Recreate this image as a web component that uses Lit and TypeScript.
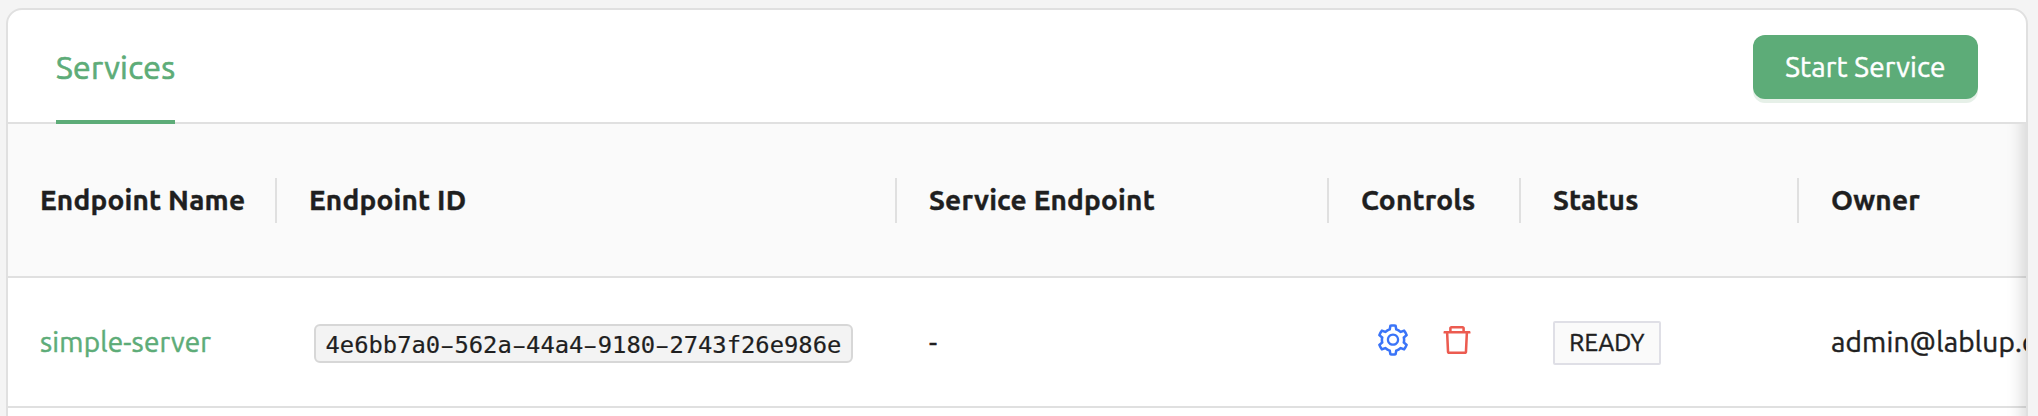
import { LitElement, html, css, svg } from "lit";
import { customElement } from "lit/decorators.js";

const gear =
  "M924.8 625.7l-65.5-56c3.1-19 4.7-38.4 4.7-57.8s-1.6-38.8-4.7-57.8l65.5-56a32.03 32.03 0 009.3-35.2l-.9-2.6a443.74 443.74 0 00-79.7-137.9l-1.8-2.1a32.12 32.12 0 00-35.1-9.5l-81.3 28.9c-30-24.6-63.5-44-99.7-57.6l-15.7-85a32.05 32.05 0 00-25.8-25.7l-2.7-.5c-52.1-9.4-106.9-9.4-159 0l-2.7.5a32.05 32.05 0 00-25.8 25.7l-15.8 85.4a351.86 351.86 0 00-99 57.4l-81.9-29.1a32 32 0 00-35.1 9.5l-1.8 2.1a446.02 446.02 0 00-79.7 137.9l-.9 2.6c-4.5 12.5-.8 26.5 9.3 35.2l66.3 56.6c-3.1 18.8-4.6 38-4.6 57.1 0 19.2 1.5 38.4 4.6 57.1L99 625.5a32.03 32.03 0 00-9.3 35.2l.9 2.6c18.1 50.4 44.9 96.9 79.7 137.9l1.8 2.1a32.12 32.12 0 0035.1 9.5l81.9-29.1c29.8 24.5 63.1 43.9 99 57.4l15.8 85.4a32.05 32.05 0 0025.8 25.7l2.7.5a449.4 449.4 0 00159 0l2.7-.5a32.05 32.05 0 0025.8-25.7l15.7-85a350 350 0 0099.7-57.6l81.3 28.9a32 32 0 0035.1-9.5l1.8-2.1c34.8-41.1 61.6-87.5 79.7-137.9l.9-2.6c4.5-12.3.8-26.3-9.3-35zM788.3 465.9c2.5 15.1 3.8 30.6 3.8 46.1s-1.3 31-3.8 46.1l-6.6 40.1 74.7 63.9a370.03 370.03 0 01-42.6 73.6L721 702.8l-31.4 25.8c-23.9 19.6-50.5 35-79.3 45.8l-38.1 14.3-17.9 97a377.5 377.5 0 01-85 0l-17.9-97.2-37.8-14.5c-28.5-10.8-55-26.2-78.7-45.7l-31.4-25.9-93.4 33.2c-17-22.9-31.2-47.6-42.6-73.6l75.5-64.5-6.5-40c-2.4-14.9-3.7-30.3-3.7-45.5 0-15.3 1.2-30.6 3.7-45.5l6.5-40-75.5-64.5c11.3-26.1 25.6-50.7 42.6-73.6l93.4 33.2 31.4-25.9c23.7-19.5 50.2-34.9 78.7-45.7l37.9-14.3 17.9-97.2c28.1-3.2 56.8-3.2 85 0l17.9 97 38.1 14.3c28.7 10.8 55.4 26.2 79.3 45.8l31.4 25.8 92.8-32.9c17 22.9 31.2 47.6 42.6 73.6L781.8 426l6.5 39.9zM512 326c-97.2 0-176 78.8-176 176s78.8 176 176 176 176-78.8 176-176-78.8-176-176-176zm79.2 255.2A111.6 111.6 0 01512 614c-29.9 0-58-11.7-79.2-32.8A111.6 111.6 0 01400 502c0-29.9 11.7-58 32.8-79.2C454 401.6 482.1 390 512 390c29.9 0 58 11.6 79.2 32.8A111.6 111.6 0 01624 502c0 29.9-11.7 58-32.8 79.2z";
const trash =
  "M360 184h-8c4.4 0 8-3.6 8-8v8h304v-8c0 4.4 3.6 8 8 8h-8v72h72v-80c0-35.3-28.7-64-64-64H352c-35.3 0-64 28.7-64 64v80h72v-72zm504 72H160c-17.7 0-32 14.3-32 32v32c0 4.4 3.6 8 8 8h60.4l24.7 523c1.6 34.1 29.8 61 63.9 61h454c34.2 0 62.3-26.8 63.9-61l24.7-523H888c4.4 0 8-3.6 8-8v-32c0-17.7-14.3-32-32-32zM731.3 840H292.7l-24.2-512h487l-24.2 512z";

const icon = (d: string) => html`<svg class="icon" viewBox="0 0 1024 1024">${svg`<path fill="currentColor" d=${d}></path>`}</svg>`;

@customElement("app-root")
export class AppRoot extends LitElement {
  static styles = css`
    :host {
      display: block;
      box-sizing: border-box;
      height: 416px;
      padding: 8px 10px 0 6px;
      overflow: hidden;
      background: #f4f4f4;
      color: #1f1f1f;
      font: 28px/44px Ubuntu, "Noto Sans", sans-serif;
      letter-spacing: 0.17px;
      -webkit-text-stroke: 0.5px currentColor;
    }
    .card {
      position: relative;
      box-sizing: border-box;
      height: 440px;
      border: 2px solid #e0e0e0;
      border-radius: 16px;
      background: #fff;
      overflow: hidden;
    }
    .head {
      display: flex;
      justify-content: space-between;
      align-items: center;
      box-sizing: border-box;
      height: 114px;
      padding: 0 48px;
      border-bottom: 2px solid #e0e0e0;
    }
    .tab {
      display: flex;
      align-items: center;
      box-sizing: border-box;
      width: 119px;
      height: 114px;
      margin-bottom: -2px;
      border-bottom: 4px solid #5dac78;
      padding-top: 3px;
      color: #5dac78;
      font-size: 32px;
      letter-spacing: 0.3px;
      white-space: nowrap;
      -webkit-text-stroke: 0.7px currentColor;
    }
    .start {
      box-sizing: border-box;
      width: 225px;
      height: 64px;
      margin-top: 6px;
      margin-bottom: 4px;
      border: 0;
      border-radius: 12px;
      padding: 0;
      background: #5dac78;
      box-shadow: 0 4px 0 #e6f0e8;
      color: #fff;
      font: inherit;
      letter-spacing: 0.17px;
    }
    .row {
      display: grid;
      grid-template-columns: 269px 620px 432px 192px 278px 400px;
      align-items: center;
      height: 128px;
      border-bottom: 2px solid #e0e0e0;
      white-space: nowrap;
    }
    .titles {
      height: 152px;
      background: #fafafa;
      font-weight: 700;
      letter-spacing: 0.2px;
      -webkit-text-stroke: 0.4px currentColor;
    }
    .cell {
      display: flex;
      align-items: center;
      height: 45px;
      box-sizing: border-box;
      padding-left: 32px;
    }
    .titles .cell {
      border-right: 2px solid #e0e0e0;
    }
    .link {
      color: #5dac78;
    }
    code {
      box-sizing: border-box;
      width: 539px;
      height: 39px;
      margin: 3px 0 0 5px;
      border: 2px solid #d7d7d7;
      border-radius: 6px;
      padding-left: 9.5px;
      background: #f3f3f3;
      font: 23.8px/38px "DejaVu Sans Mono", monospace;
      letter-spacing: 0;
      -webkit-text-stroke: 0.2px currentColor;
    }
    .dash {
      display: inline-block;
      line-height: 1;
      transform: scaleX(1.7);
    }
    .actions {
      gap: 28px;
      padding-left: 46px;
    }
    .icon {
      width: 36px;
      height: 36px;
      margin-top: -4px;
    }
    .gear {
      display: flex;
      color: #3a74f8;
    }
    .trash {
      display: flex;
      color: #ec5b50;
    }
    .tag {
      box-sizing: border-box;
      width: 108px;
      height: 44px;
      margin-top: 2px;
      border: 2px solid #dfdfe6;
      border-radius: 2px;
      background: #fafafa;
      font-size: 24px;
      line-height: 40px;
      text-align: center;
    }
    .shade {
      position: absolute;
      top: 114px;
      right: 0;
      bottom: 0;
      width: 60px;
      box-shadow: inset -20px 0 16px -16px rgba(5, 5, 5, 0.15);
    }
  `;

  render() {
    const titles = ["Endpoint Name", "Endpoint ID", "Service Endpoint", "Controls", "Status", "Owner"];
    const id = "4e6bb7a0-562a-44a4-9180-2743f26e986e";
    return html`
      <div class="card">
        <div class="head">
          <div class="tab">Services</div>
          <button class="start">Start Service</button>
        </div>
        <div class="row titles">${titles.map((t) => html`<div class="cell">${t}</div>`)}</div>
        <div class="row">
          <div class="cell link">simple-server</div>
          <div class="cell"><code>${id.split("-").map((part, i) => (i ? html`<span class="dash">-</span>${part}` : part))}</code></div>
          <div class="cell">-</div>
          <div class="cell actions">
            <span class="gear">${icon(gear)}</span>
            <span class="trash">${icon(trash)}</span>
          </div>
          <div class="cell"><span class="tag">READY</span></div>
          <div class="cell">admin@lablup.com</div>
        </div>
        <div class="shade"></div>
      </div>
    `;
  }
}
